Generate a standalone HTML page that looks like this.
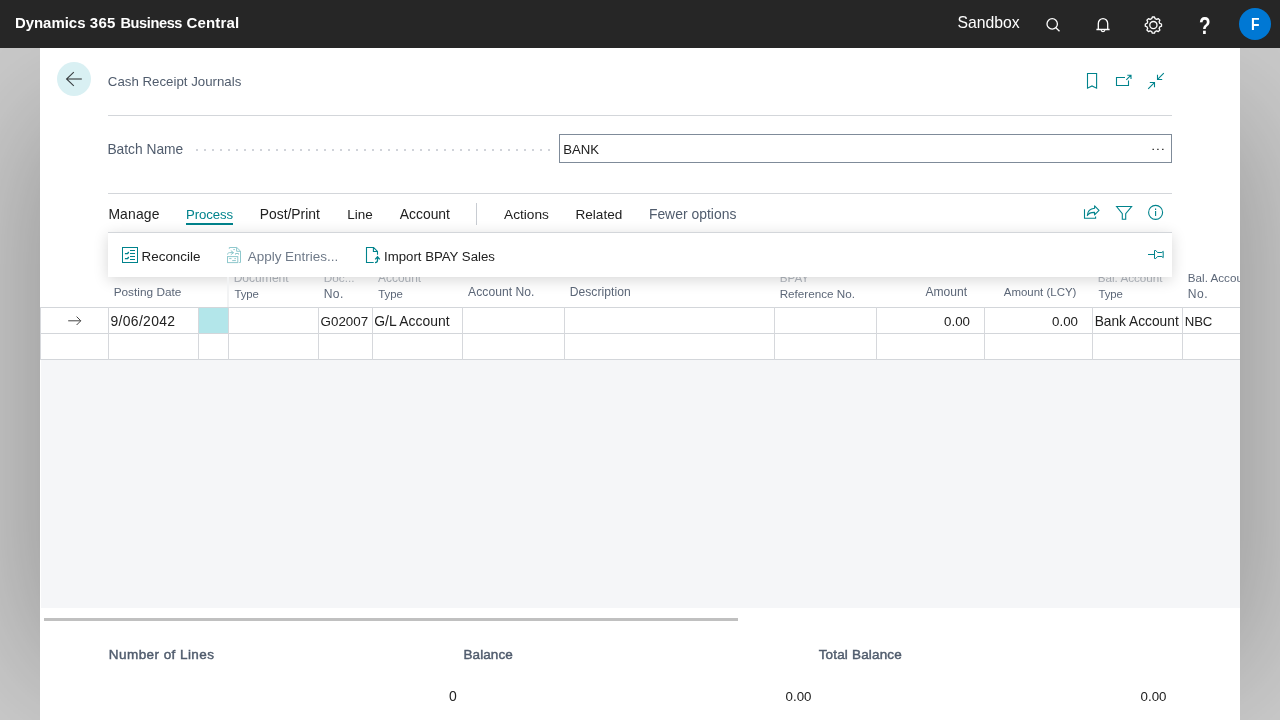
<!DOCTYPE html>
<html lang="en">
<head>
<meta charset="utf-8">
<title>Cash Receipt Journals - Dynamics 365 Business Central</title>
<style>
*{box-sizing:border-box;margin:0;padding:0}
html,body{width:1280px;height:720px;overflow:hidden}
body{font-family:"Liberation Sans",sans-serif;font-size:14px;color:#212121;position:relative;
 background:#cacaca;}
.abs{position:absolute}
.lay{position:absolute;left:0;top:0;width:100%;height:100%;will-change:transform;pointer-events:none}
.t{position:absolute;white-space:nowrap;line-height:20px;height:20px}
#shade{position:absolute;left:40px;top:116px;width:1200px;height:552px;box-shadow:0 0 130px rgba(0,0,0,.29)}
#topbar{position:absolute;z-index:2;left:0;top:0;width:1280px;height:48px;background:#262626;color:#fff}
#page{position:absolute;left:40px;top:48px;width:1200px;height:672px;background:#fff;overflow:hidden}
.slate{color:#505c6d}
.teal{color:#00838c}
.hl{position:absolute;height:1px;background:#d3d6da}
.vl{position:absolute;width:1px;background:#d6d8dc}
.hd{color:#5c6778}
.f{color:#b4b9c0}
.dis{color:#6f7a89}
.b{font-weight:bold}
.sb{-webkit-text-stroke:.45px currentColor}
</style>
</head>
<body>
<div id="shade"></div>
<div id="topbar">
<div class="lay">
  <div id="title" class="abs" style="left:0;top:0"><span id="title1" class="t b" style="left:14.90px;top:13.01px;font-size:14.95px">Dynamics</span> <span id="title2" class="t b" style="left:89.80px;top:13.00px;font-size:15.00px;letter-spacing:0.283px">365</span> <span id="title3" class="t b" style="left:120.42px;top:13.00px;font-size:14.60px;letter-spacing:-0.402px">Business</span> <span id="title4" class="t b" style="left:186.50px;top:13.00px;font-size:15.00px;letter-spacing:0.173px">Central</span></div>
  <div id="sandbox" class="t" style="left:957.47px;top:13.01px;font-size:15.75px">Sandbox</div>
</div>
  <div class="t" style="left:1199px;top:16.1px;font-weight:bold;font-size:24px;transform:scaleX(.79);transform-origin:0 0">?</div>
  <div class="abs" style="left:1239px;top:8px;width:32px;height:32px;border-radius:50%;background:#0078d4"></div>
  <div class="t" style="left:1250.8px;top:15.3px;font-weight:bold;font-size:16.6px;transform:scaleX(.84);transform-origin:0 0">F</div>
</div>

<div id="page">
  <!-- header -->
  <div class="abs" style="left:17px;top:14px;width:34px;height:34px;border-radius:50%;background:#d9f0f3"></div>

  <div class="hl" style="left:68px;top:67px;width:1064px"></div>
  <div class="abs" style="left:156px;top:101px;width:354px;height:2px;background-image:linear-gradient(to right,#d0d3d9 2px,transparent 2px);background-size:8px 2px"></div>
  <div class="abs" style="left:519px;top:86px;width:613px;height:29px;border:1px solid #7f8b99;background:#fff"></div>
  <div class="hl" style="left:68px;top:145px;width:1064px"></div>

  <!-- menu -->
  <div class="abs" style="left:146px;top:175px;width:47px;height:2px;background:#00838c"></div>
  <div class="vl" style="left:436px;top:155px;height:22px;background:#c8ccd2"></div>

  <!-- table header -->
<div class="lay">
  <div id="h_post" class="t hd" style="left:73.65px;top:234.01px;font-size:11.84px">Posting Date</div>
  <div id="h_doc1" class="t hd f" style="left:193.63px;top:220.01px;font-size:12.09px">Document</div>
  <div id="h_doc2" class="t hd" style="left:194.52px;top:236.01px;font-size:11.40px;letter-spacing:-0.108px">Type</div>
  <div id="h_dno1" class="t hd f" style="left:283.81px;top:220.01px;font-size:11.76px">Doc...</div>
  <div id="h_dno2" class="t hd" style="left:283.78px;top:236.00px;font-size:12.10px;letter-spacing:0.351px">No.</div>
  <div id="h_acc1" class="t hd f" style="left:338.10px;top:220.00px;font-size:11.93px">Account</div>
  <div id="h_acc2" class="t hd" style="left:338.27px;top:236.01px;font-size:11.40px;letter-spacing:-0.025px">Type</div>
  <div id="h_accno" class="t hd" style="left:428.10px;top:234.01px;font-size:12.10px;letter-spacing:0.045px">Account No.</div>
  <div id="h_desc" class="t hd" style="left:529.63px;top:234.01px;font-size:12.10px;letter-spacing:0.052px">Description</div>
  <div id="h_bpay1" class="t hd f" style="left:739.69px;top:220.00px;font-size:11.70px">BPAY</div>
  <div id="h_bpay2" class="t hd" style="left:739.66px;top:236.00px;font-size:11.69px">Reference No.</div>
  <div id="h_amt" class="t hd" style="left:885.50px;top:234.01px;font-size:12.09px">Amount</div>
  <div id="h_lcy" class="t hd" style="left:963.80px;top:234.01px;font-size:11.46px">Amount (LCY)</div>
  <div id="h_bal1" class="t hd f" style="left:1057.77px;top:220.01px;font-size:11.65px">Bal. Account</div>
  <div id="h_bal2" class="t hd" style="left:1058.47px;top:236.01px;font-size:11.40px;letter-spacing:-0.092px">Type</div>
  <div id="h_bno1" class="t hd" style="left:1147.87px;top:220.01px;font-size:11.65px">Bal. Account</div>
  <div id="h_bno2" class="t hd" style="left:1147.83px;top:236.00px;font-size:12.10px;letter-spacing:0.451px">No.</div>
</div>

  <!-- action bar (overlays header) -->
  <div class="abs" style="left:68px;top:184px;width:1064px;height:45px;background:#fff;border-top:1px solid #d3d6da;box-shadow:0 3px 14px rgba(0,0,0,.16)"></div>

  <!-- grid -->
  <div class="abs" style="left:1px;top:312px;width:1199px;height:248px;background:#f5f6f8"></div>
  <div class="abs" style="left:158px;top:260px;width:30px;height:25px;background:#b3e6ea"></div>
  <div class="hl" style="left:0;top:259px;width:1200px"></div>
  <div class="hl" style="left:0;top:285px;width:1200px"></div>
  <div class="hl" style="left:0;top:311px;width:1200px"></div>

  <div class="vl" style="left:0px;top:259px;height:53px"></div><div class="vl" style="left:68px;top:259px;height:53px"></div><div class="vl" style="left:158px;top:259px;height:53px"></div><div class="vl" style="left:188px;top:259px;height:53px"></div><div class="vl" style="left:278px;top:259px;height:53px"></div><div class="vl" style="left:332px;top:259px;height:53px"></div><div class="vl" style="left:422px;top:259px;height:53px"></div><div class="vl" style="left:524px;top:259px;height:53px"></div><div class="vl" style="left:734px;top:259px;height:53px"></div><div class="vl" style="left:836px;top:259px;height:53px"></div><div class="vl" style="left:944px;top:259px;height:53px"></div><div class="vl" style="left:1052px;top:259px;height:53px"></div><div class="vl" style="left:1142px;top:259px;height:53px"></div><div class="vl" style="left:187px;top:229px;width:2px;height:30px;background:#f2f3f4"></div>
  <!-- footer -->
  <div class="abs" style="left:4px;top:570px;width:694px;height:3px;background:#c0c0c0"></div>
<div class="lay">
  <div id="crj" class="t slate" style="left:67.84px;top:24.01px;font-size:13.28px">Cash Receipt Journals</div>
  <div id="batch" class="t slate" style="left:67.40px;top:92.00px;font-size:13.79px">Batch Name</div>
  <div id="bank" class="t" style="left:523.34px;top:92.01px;font-size:13.20px;letter-spacing:-0.066px">BANK</div>
  <div id="manage" class="t" style="left:68.39px;top:156.01px;font-size:13.90px;letter-spacing:0.177px">Manage</div>
  <div id="process" class="t teal" style="left:145.94px;top:157.01px;font-size:13.20px;letter-spacing:-0.088px">Process</div>
  <div id="postprint" class="t" style="left:219.79px;top:156.00px;font-size:13.86px">Post/Print</div>
  <div id="line" class="t" style="left:307.22px;top:157.00px;font-size:13.47px">Line</div>
  <div id="account" class="t" style="left:359.80px;top:156.01px;font-size:13.88px">Account</div>
  <div id="actions" class="t" style="left:464.00px;top:157.00px;font-size:13.70px">Actions</div>
  <div id="related" class="t" style="left:535.51px;top:157.01px;font-size:13.59px">Related</div>
  <div id="fewer" class="t slate" style="left:608.89px;top:156.01px;font-size:13.90px;letter-spacing:0.019px">Fewer options</div>
  <div id="reconcile" class="t" style="left:101.53px;top:199.01px;font-size:13.43px">Reconcile</div>
  <div id="apply" class="t dis" style="left:207.70px;top:199.01px;font-size:13.47px">Apply Entries...</div>
  <div id="import" class="t" style="left:344.01px;top:199.00px;font-size:13.23px">Import BPAY Sales</div>
  <div id="c_date" class="t" style="left:70.54px;top:263.01px;font-size:13.90px;letter-spacing:0.333px">9/06/2042</div>
  <div id="c_doc" class="t" style="left:280.58px;top:264.01px;font-size:13.36px">G02007</div>
  <div id="c_gl" class="t" style="left:334.31px;top:263.01px;font-size:13.90px;letter-spacing:0.017px">G/L Account</div>
  <div id="c_amt" class="t" style="left:904.10px;top:264.00px;font-size:13.30px">0.00</div>
  <div id="c_lcy" class="t" style="left:1012.10px;top:264.00px;font-size:13.30px">0.00</div>
  <div id="c_bank" class="t" style="left:1054.65px;top:264.01px;font-size:13.75px">Bank Account</div>
  <div id="c_nbc" class="t" style="left:1144.69px;top:264.01px;font-size:13.20px;letter-spacing:-0.069px">NBC</div>
  <div id="f_nol" class="t slate sb" style="left:68.87px;top:597.01px;font-size:13.50px;letter-spacing:0.431px">Number of Lines</div>
  <div id="f_bal" class="t slate sb" style="left:423.52px;top:597.01px;font-size:13.50px;letter-spacing:0.080px">Balance</div>
  <div id="f_tot" class="t slate sb" style="left:778.68px;top:597.01px;font-size:13.50px;letter-spacing:0.171px">Total Balance</div>
  <div id="f_v0" class="t" style="left:408.98px;top:638.00px;font-size:13.98px">0</div>
  <div id="f_v1" class="t" style="left:745.60px;top:639.01px;font-size:13.30px">0.00</div>
  <div id="f_v2" class="t" style="left:1100.60px;top:639.01px;font-size:13.30px">0.00</div>
</div>
</div>

<svg id="ico" class="abs" style="left:0;top:0;z-index:3;pointer-events:none" width="1280" height="720" viewBox="0 0 1280 720" fill="none" stroke-linecap="butt" stroke-linejoin="miter">
  <!-- top bar icons -->
  <g stroke="#fff" stroke-width="1.3">
    <circle cx="1052.2" cy="23.9" r="5.2"/><path d="M1055.9 27.7 L1059.5 31.3"/>
    <path d="M1098.3 29.4 V23.5 a4.7 4.9 0 0 1 9.4 0 V29.4 M1096.4 29.5 H1109.6 M1101.2 30.4 a1.9 1.9 0 0 0 3.6 0"/>
    <circle cx="1153.4" cy="25.1" r="3.6"/>
    <path stroke-linejoin="round" d="M1152.3 17.0 L1154.5 17.0 L1155.1 18.7 L1156.7 19.4 L1158.3 18.6 L1159.9 20.2 L1159.1 21.8 L1159.8 23.4 L1161.5 24.0 L1161.5 26.2 L1159.8 26.8 L1159.1 28.4 L1159.9 30.0 L1158.3 31.6 L1156.7 30.8 L1155.1 31.5 L1154.5 33.2 L1152.3 33.2 L1151.7 31.5 L1150.1 30.8 L1148.5 31.6 L1146.9 30.0 L1147.7 28.4 L1147.0 26.8 L1145.3 26.2 L1145.3 24.0 L1147.0 23.4 L1147.7 21.8 L1146.9 20.2 L1148.5 18.6 L1150.1 19.4 L1151.7 18.7Z"/>
  </g>
  <!-- back arrow -->
  <path stroke="#3a3f42" stroke-width="1.1" d="M73.8 72.2 L66.6 79 L73.8 85.8"/>
  <path stroke="#2b2f31" stroke-width="1.05" d="M66.8 79 H81.8"/>
  <!-- page header icons -->
  <g stroke="#00838c" stroke-width="1.1">
    <path d="M1087.5 73.5 H1096.6 V88.2 L1092 85.9 L1087.5 88.2 Z"/>
    <path d="M1125 77.5 H1116.5 V85.5 H1128.5 V80.5 M1126.3 79.8 L1130.8 75.4 M1127.3 75.3 H1131 V79"/>
    <path d="M1163.8 73.2 L1157.6 79.4 M1157.5 74.8 V79.5 H1162.2 M1148.2 88.8 L1154.4 82.6 M1149.8 82.5 H1154.5 V87.2"/>
    <!-- menu right icons -->
    <path d="M1084.5 209.2 V218.3 H1095.6 V216.6"/>
    <path stroke-linejoin="round" d="M1094.6 205.8 L1099 210.3 L1094.6 214.8 V212.4 C1091 212.3 1088.6 213.3 1087.3 215.6 C1087.5 211.3 1090 208.6 1094.6 208.2 Z"/>
    <path d="M1116.6 206.5 H1131.6 L1125.7 213.6 V219.3 H1122.3 V213.6 Z"/>
    <circle cx="1155.6" cy="212.4" r="7"/>
    <path d="M1155.6 211 V216 M1155.6 208.6 V209.9"/>
    <!-- pin -->
    <path d="M1148 254.5 H1154.5 M1154.5 250.5 H1155.8 L1157.5 252.5 H1161.9 L1163.2 251.3 V257.7 L1161.9 256.5 H1157.5 L1155.8 258.5 H1154.5 Z" stroke-width="1"/>
    <!-- reconcile -->
    <rect x="122.5" y="247.5" width="15" height="15" stroke-width="1"/>
    <path d="M130 250.5 H135 M130 253.5 H135 M130 256.5 H135 M130 259.5 H135" stroke-width="1"/>
    <path d="M124.9 253.6 H127.6 L128.7 252 M124.9 258.6 H127.6 L128.7 257" stroke-width="1.4"/>
    <!-- import -->
    <path d="M373.7 262.5 H366.5 V247.5 H373.6 L377.5 251.4 V254.8 M373.4 247.5 V251.5 H377.5"/>
    <path d="M377.5 257 V260.3 C377.5 261.8 376.6 262.6 375 262.6 M375.2 259.4 L377.5 256.8 L379.8 259.4" stroke-width="1.3"/>
  </g>
  <!-- apply entries (disabled) -->
  <g stroke="#8fc8cd" stroke-width="1">
    <path d="M229.3 248.8 V247.5 H236.8 L240.5 251.1 V262.5 H239.2 M236.6 247.5 V251.3 H240.5 M233.3 249.6 H234.9"/>
    <path d="M227.6 254.6 C227.6 253.2 228.4 252.6 229.6 252.6 H233.4 M230.8 250.6 L233.6 252.7 L230.8 254.7 M235.5 254.6 V253.5 H238.5 V254.6"/>
    <rect x="227.5" y="256.6" width="10.3" height="6"/>
    <path d="M229.2 258.6 H231.5 M234.4 258.6 H235.9 M232.2 260.6 H235.9"/>
  </g>
  <!-- lookup ellipsis -->
  <path stroke="#2a2a2a" stroke-width="1.3" d="M1152.5 149.4 h1.4 M1157.2 149.4 h1.4 M1162.1 149.4 h1.4"/>
  <!-- row arrow -->
  <path stroke="#444" stroke-width="1" d="M68.2 320.8 H80.6 M76.6 316.6 L80.8 320.8 L76.6 325"/>
</svg>
</body>
</html>
